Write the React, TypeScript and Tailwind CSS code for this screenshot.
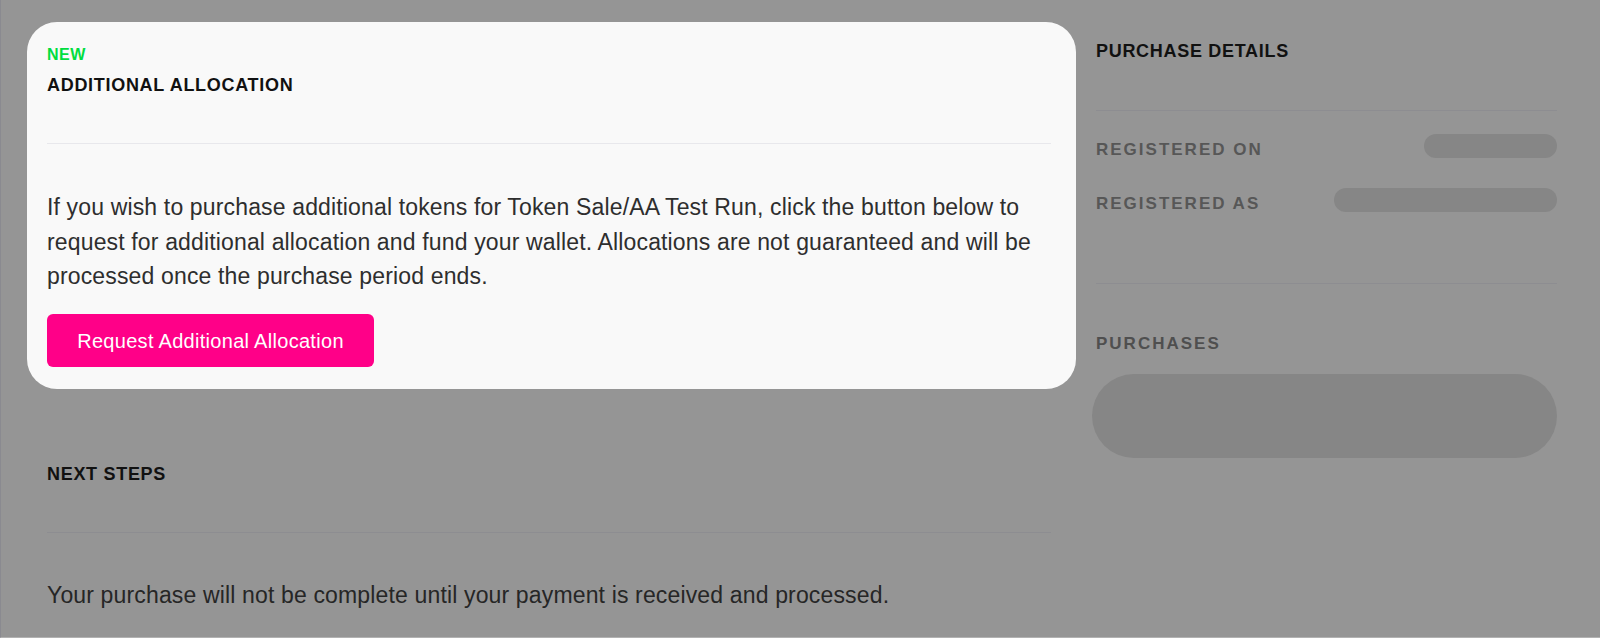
export default function App() {
  return (
    <div className="flex h-[638px] w-[1600px] overflow-hidden border-b border-l border-b-[#b2b2b2] border-l-[#8a8a90] bg-[#959595] font-['Liberation_Sans',Arial,sans-serif]">
      {/* Left column */}
      <div className="ml-[26px] w-[1049px] shrink-0">
        {/* Highlighted card */}
        <section className="mt-[22px] rounded-[30px] bg-[#f9f9f9] pb-[22px] pl-5 pr-[25px] pt-[23px]">
          <p className="text-[16px] font-bold leading-5 tracking-[0.5px] text-[#00dd3f]">NEW</p>
          <h2 className="mt-[8px] text-[18px] font-bold leading-6 tracking-[0.7px] text-[#111]">
            ADDITIONAL ALLOCATION
          </h2>
          <div className="mt-[46px] h-px bg-[#e8e8ec]" />
          <p className="mt-[46px] text-[23px] leading-[34.5px] tracking-[0.15px] text-[#2e2e2e]">
            If you wish to purchase additional tokens for Token Sale/AA Test Run, click the button below to
            request for additional allocation and fund your wallet. Allocations are not guaranteed and will be
            processed once the purchase period ends.
          </p>
          <button className="mt-[20px] h-[53px] w-[327px] rounded-md bg-[#ff0088] pt-[2px] text-[20px] tracking-[0.3px] text-white">
            Request Additional Allocation
          </button>
        </section>

        {/* Next steps */}
        <section className="pl-5 pr-[25px]">
          <h2 className="mt-[73px] text-[18px] font-bold leading-6 tracking-[0.7px] text-[#111]">NEXT STEPS</h2>
          <div className="mt-[46px] h-px bg-[#8d8d91]" />
          <p className="mt-[45px] text-[23px] leading-[34.5px] tracking-[0.15px] text-[#262626]">
            Your purchase will not be complete until your payment is received and processed.
          </p>
        </section>
      </div>

      {/* Right column */}
      <aside className="ml-5 w-[461px] shrink-0">
        <h2 className="mt-[39px] text-[18px] font-bold leading-6 tracking-[0.7px] text-[#111]">PURCHASE DETAILS</h2>
        <div className="mt-[47px] h-px bg-[#8d8d91]" />

        <div className="mt-[23px] flex h-6 items-center justify-between">
          <span className="mt-2 text-[17px] font-bold tracking-[2px] text-[#575757]">REGISTERED ON</span>
          <div className="h-6 w-[133px] rounded-full bg-[#868686]" />
        </div>
        <div className="mt-[30px] flex h-6 items-center justify-between">
          <span className="mt-2 text-[17px] font-bold tracking-[2px] text-[#575757]">REGISTERED AS</span>
          <div className="h-6 w-[223px] rounded-full bg-[#868686]" />
        </div>

        <div className="mt-[71px] h-px bg-[#8d8d91]" />
        <h3 className="mt-[48px] text-[17px] font-bold leading-6 tracking-[2px] text-[#4f4f4f]">PURCHASES</h3>
        <div className="-ml-1 mt-[18px] h-[84px] rounded-full bg-[#868686]" />
      </aside>
    </div>
  );
}
